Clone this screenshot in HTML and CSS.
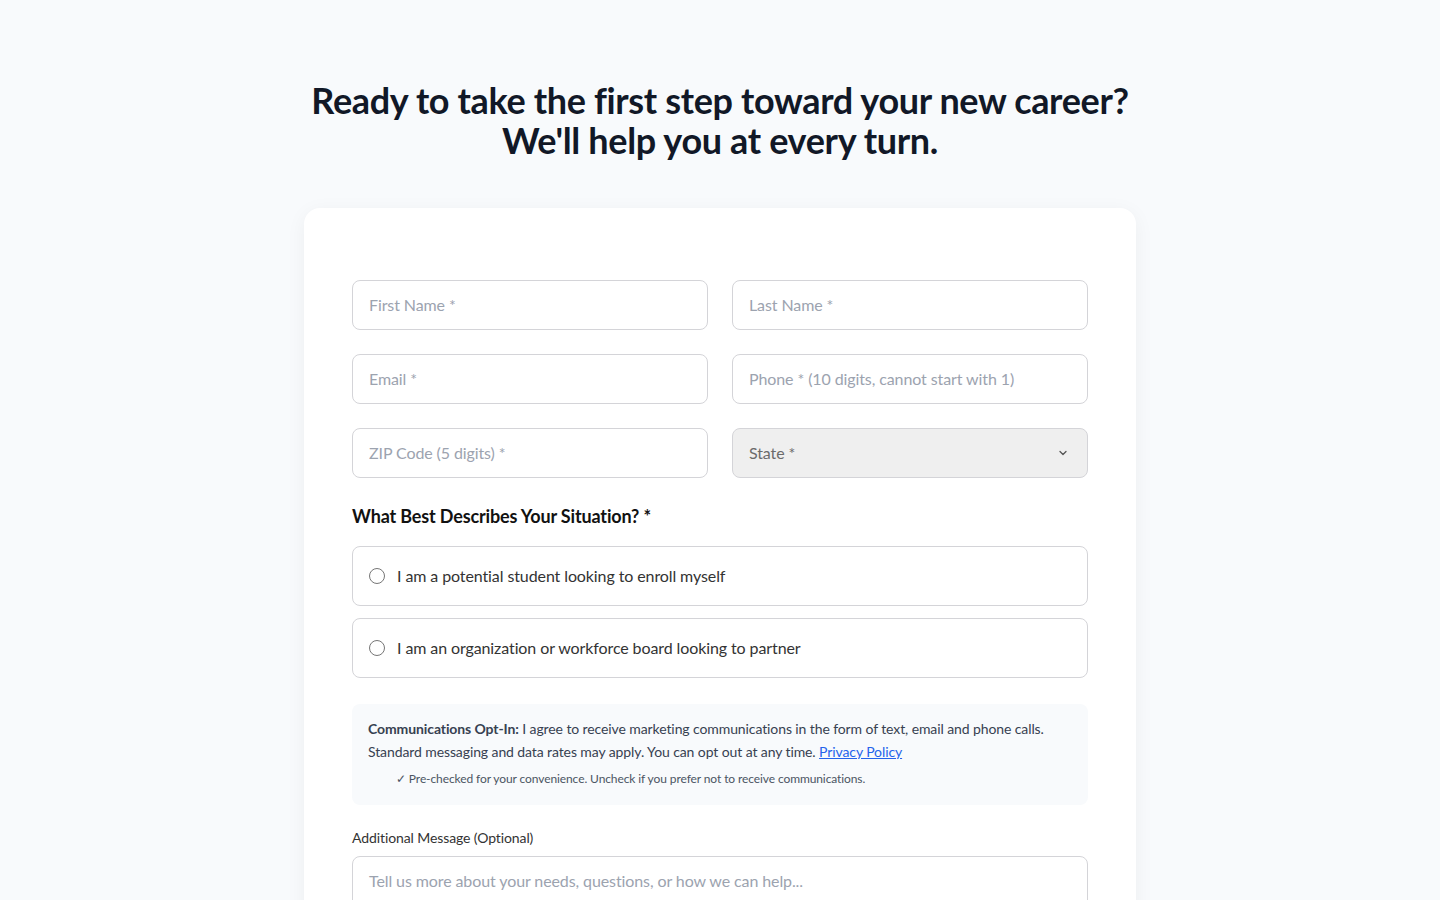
FILE: index.html
```html
<!DOCTYPE html>
<html lang="en">
<head>
<meta charset="utf-8">
<title>Contact</title>
<link rel="stylesheet" href="styles.css">
</head>
<body>
<main class="page">
  <h1 class="title">Ready to take the first step toward your new career?<br>We'll help you at every turn.</h1>
  <form class="card">
    <div class="grid">
      <input class="field" type="text" placeholder="First Name *">
      <input class="field" type="text" placeholder="Last Name *">
      <input class="field" type="email" placeholder="Email *">
      <input class="field" type="tel" placeholder="Phone * (10 digits, cannot start with 1)">
      <input class="field" type="text" placeholder="ZIP Code (5 digits) *">
      <div class="select">
        <span>State *</span>
        <svg class="chev" width="12" height="12" viewBox="0 0 12 12"><path d="M3 4.5 6 7.5 9 4.5" fill="none" stroke="#555" stroke-width="1.3" stroke-linecap="round" stroke-linejoin="round"/></svg>
      </div>
    </div>
    <h2 class="q">What Best Describes Your Situation? *</h2>
    <label class="option"><span class="radio"></span><span>I am a potential student looking to enroll myself</span></label>
    <label class="option"><span class="radio"></span><span>I am an organization or workforce board looking to partner</span></label>
    <div class="optin">
      <p class="optin-text"><strong>Communications Opt-In:</strong> I agree to receive marketing communications in the form of text, email and phone calls. Standard messaging and data rates may apply. You can opt out at any time. <a href="#">Privacy Policy</a></p>
      <p class="optin-note">✓ Pre-checked for your convenience. Uncheck if you prefer not to receive communications.</p>
    </div>
    <label class="msg-label">Additional Message (Optional)</label>
    <div class="textarea">Tell us more about your needs, questions, or how we can help...</div>
  </form>
</main>
</body>
</html>
```
FILE: styles.css
```css
* { box-sizing: border-box; }
html, body { margin: 0; padding: 0; }
body {
  background: #f8fafc;
  font-family: Lato, "Open Sans", sans-serif;
  color: #111827;
  letter-spacing: -0.1px;
  overflow: hidden;
  height: 900px;
}
.page {
  display: flex;
  flex-direction: column;
  align-items: center;
  padding-top: 80px;
}
.title {
  margin: 0;
  font-size: 36px;
  line-height: 40px;
  font-weight: 700;
  letter-spacing: -0.35px;
  text-align: center;
  color: #111827;
}
.card {
  margin-top: 48px;
  width: 832px;
  background: #fff;
  border-radius: 16px;
  box-shadow: 0 4px 20px rgba(15, 23, 42, 0.05);
  padding: 72px 48px 40px;
}
.grid {
  display: grid;
  grid-template-columns: 1fr 1fr;
  gap: 24px;
}
.field, .select {
  height: 50px;
  border: 1px solid #d4d4d8;
  border-radius: 8px;
  padding: 0 16px 1px;
  font-family: Lato, sans-serif;
  font-size: 16px;
  letter-spacing: -0.1px;
  color: #111;
  background: #fff;
  outline: none;
}
.field::placeholder { color: #9ca3af; }
.select {
  background: #efefef;
  display: flex;
  align-items: center;
  justify-content: space-between;
  color: #6b6b6b;
  padding-right: 18px;
}
.q {
  margin: 26px 0 18px;
  font-size: 18px;
  line-height: 24px;
  font-weight: 700;
  letter-spacing: -0.15px;
  color: #111;
}
.option {
  display: flex;
  align-items: center;
  gap: 12px;
  height: 60px;
  border: 1px solid #d4d4d8;
  border-radius: 8px;
  padding: 0 16px;
  margin-bottom: 12px;
  font-size: 16px;
  line-height: 20px;
  color: #333;
}
.radio {
  width: 16px;
  height: 16px;
  border: 1px solid #767676;
  border-radius: 50%;
  flex: none;
}
.optin {
  margin-top: 26px;
  background: #f8fafc;
  border-radius: 8px;
  padding: 13px 16px 18px;
}
.optin-text {
  margin: 0;
  font-size: 14px;
  line-height: 23px;
  color: #374151;
}
.optin-text strong { font-weight: 700; color: #374151; }
.optin-text a { color: #2563eb; text-decoration: underline; }
.optin-note {
  margin: 8px 0 0 28px;
  font-size: 12px;
  line-height: 16px;
  color: #4b5563;
}
.msg-label {
  display: block;
  margin-top: 23px;
  font-size: 14px;
  line-height: 20px;
  color: #333;
}
.textarea {
  margin-top: 8px;
  height: 100px;
  border: 1px solid #d4d4d8;
  border-radius: 8px;
  padding: 13px 16px;
  font-size: 16px;
  line-height: 22px;
  color: #9ca3af;
}
```
